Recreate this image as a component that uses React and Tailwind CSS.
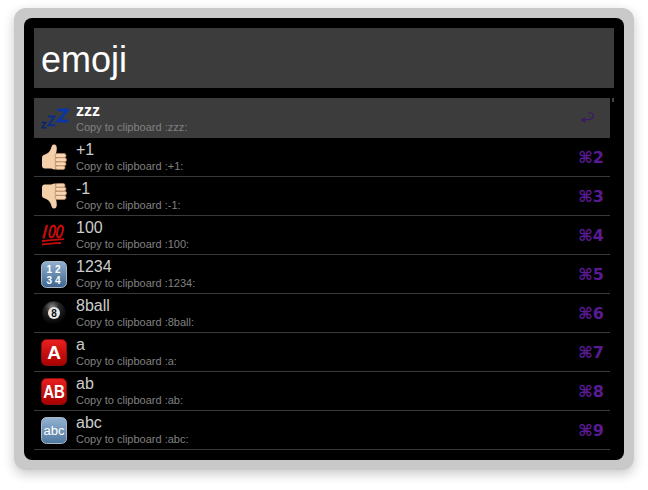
const ZzzIcon = () => (
  <svg width="28" height="25" viewBox="1 0 28 25" fill="none">
    <path d="M1.500 16.500h4.300l-4 5.300h4.500" strokeWidth="1.400" stroke="#0a2570" />
    <path d="M8 10.500h6.500l-6 8.800h6.800" strokeWidth="2" stroke="#0a2c88" />
    <path d="M17.500 4h10l-9.500 11h10.500" strokeWidth="2.800" stroke="#0b35a5" />
  </svg>
);

const ThumbUp = ({ flip }) => (
  <svg width="26" height="26" viewBox="0 0 26 26" className={flip ? '-scale-y-100' : ''}>
    <path
      d="M1 13.500c0-1.500 1-2.500 3-3 3-1 5-3 6-6 .6-2 1-4 3-4 2.200 0 2.800 2 2.800 4 0 2-.5 4-1 6v15c-2 0-3-.5-5-1H5c-2.500 0-4-.5-4-3z"
      fill="#f4d0aa"
    />
    <g fill="#f7d6b4" stroke="#b9875e" strokeWidth="0.800">
      <rect x="14" y="9.500" width="11" height="4.200" rx="2" />
      <rect x="14" y="13.700" width="11.500" height="4.200" rx="2" />
      <rect x="14" y="17.900" width="11" height="4" rx="2" />
      <rect x="14.500" y="21.900" width="9.500" height="3.500" rx="1.700" />
    </g>
  </svg>
);

const Hundred = () => (
  <svg width="25" height="22" viewBox="0 0 25 22" fill="none" stroke="#c40a0a">
    <path d="M6 1 2.500 14.500" strokeWidth="2.400" />
    <ellipse cx="11.500" cy="7.500" rx="2.600" ry="6" transform="rotate(14 11.500 7.500)" strokeWidth="2" />
    <ellipse cx="19" cy="7.500" rx="2.600" ry="6" transform="rotate(14 19 7.500)" strokeWidth="2" />
    <path d="M1 17c8-.8 15-1.300 22-1.800M1 20.500c7-.8 13-1.100 19-1.500" strokeWidth="1.800" />
  </svg>
);

const KeyTile = ({ from, to, edge, children }) => (
  <svg width="26" height="27" viewBox="0 0 26 27">
    <defs>
      <linearGradient id={`tile-${from.slice(1)}`} x1="0" y1="0" x2="0" y2="1">
        <stop offset="0" stopColor={from} />
        <stop offset="1" stopColor={to} />
      </linearGradient>
    </defs>
    <rect x="0.500" y="0.500" width="25" height="26" rx="5" fill={`url(#tile-${from.slice(1)})`} stroke={edge} strokeWidth="1" />
    {children}
  </svg>
);

const svgFont = '"Liberation Sans", Arial, sans-serif';

const Numbers = () => (
  <KeyTile from="#93b0cf" to="#3d6590" edge="#a8b6c6">
    <text x="14" y="12" textAnchor="middle" fontSize="10" fontWeight="700" letterSpacing="3" fill="#fff" fontFamily={svgFont}>12</text>
    <text x="14" y="23" textAnchor="middle" fontSize="10" fontWeight="700" letterSpacing="3" fill="#fff" fontFamily={svgFont}>34</text>
  </KeyTile>
);

const EightBall = () => (
  <svg width="25" height="24" viewBox="-1 0 25 24">
    <defs>
      <radialGradient id="ball" cx="0.420" cy="0.250" r="0.750">
        <stop offset="0" stopColor="#8a8a8a" />
        <stop offset="0.400" stopColor="#262626" />
        <stop offset="1" stopColor="#000" />
      </radialGradient>
    </defs>
    <circle cx="12" cy="12" r="11.700" fill="url(#ball)" />
    <circle cx="12" cy="12" r="6" fill="#e8e8e8" />
    <text x="12" y="15.500" textAnchor="middle" fontSize="10" fontWeight="700" fill="#111" fontFamily={svgFont}>8</text>
  </svg>
);

const RedTile = ({ label, size, stretch }) => (
  <KeyTile from="#ea2020" to="#a80000" edge="#8e0d0d">
    <text
      x="13"
      y="20"
      textAnchor="middle"
      fontSize={size}
      fontWeight="700"
      fill="#fff"
      fontFamily={svgFont}
      transform={stretch}
    >
      {label}
    </text>
  </KeyTile>
);

const AbcTile = () => (
  <KeyTile from="#93b3d2" to="#4f779f" edge="#a8b6c6">
    <text x="13" y="18" textAnchor="middle" fontSize="12" fill="#fff" fontFamily={svgFont} textLength="21" lengthAdjust="spacingAndGlyphs">abc</text>
  </KeyTile>
);

const ReturnIcon = () => (
  <svg width="15" height="12" viewBox="0 0 15 12" fill="none" stroke="#3a1a66" strokeWidth="1.300" className="mr-[9px]">
    <path d="M8.500 1c2.500-.5 4.800.3 4.800 3 0 2.300-2 3-4 3.300L2.500 8" />
    <path d="M4.800 5.400 1.500 8l3.300 2.800" fill="#3a1a66" strokeWidth="1" />
  </svg>
);

const rows = [
  { name: 'zzz', icon: <ZzzIcon /> },
  { name: '+1', icon: <ThumbUp />, key: '2' },
  { name: '-1', icon: <ThumbUp flip />, key: '3' },
  { name: '100', icon: <Hundred />, key: '4' },
  { name: '1234', icon: <Numbers />, key: '5' },
  { name: '8ball', icon: <EightBall />, key: '6' },
  { name: 'a', icon: <RedTile label="A" size="19" />, key: '7' },
  { name: 'ab', icon: <RedTile label="AB" size="15" stretch="translate(0 -5) scale(1 1.250)" />, key: '8' },
  { name: 'abc', icon: <AbcTile />, key: '9' },
];

const Row = ({ name, icon, shortcut, selected }) => (
  <div className={`flex items-center pr-[6px] ${selected ? 'h-[40px] bg-[#3c3c3c]' : 'h-[39px] border-b border-[#3a3a3a]'}`}>
    <div className="flex w-[42px] shrink-0 justify-start pl-[7px]">{icon}</div>
    <div className="flex min-w-0 flex-1 flex-col">
      <div className={`text-[16px] leading-[18px] ${selected ? 'font-bold text-white' : 'text-[#cccccc]'}`}>{name}</div>
      <div className="mt-[1px] text-[11px] leading-[13px] text-[#808080]">Copy to clipboard :{name}:</div>
    </div>
    {selected ? (
      <ReturnIcon />
    ) : (
      <div className="pt-[2px] font-['DejaVu_Sans',sans-serif] text-[16px] font-bold leading-[18px] text-[#5a1a94]">⌘{shortcut}</div>
    )}
  </div>
);

export default function App() {
  return (
    <div className="h-[490px] w-[648px] overflow-hidden bg-white pl-[14px] pt-[8px] font-['Liberation_Sans',Arial,sans-serif]">
      <div className="w-[620px] rounded-[12px] bg-[#c9c9c9] p-[10px] shadow-[0_4px_12px_rgba(0,0,0,0.22)]">
        <div className="h-[442px] rounded-[8px] bg-black p-[10px]">
          <div className="flex h-[60px] items-center bg-[#3c3c3c] pl-[7px] pt-[4px] text-[36px] leading-none text-white">emoji</div>
          <div className="mt-[10px] flex">
            <div className="w-[576px]">
              {rows.map((row, i) => (
                <Row key={row.name} name={row.name} icon={row.icon} shortcut={row.key} selected={i === 0} />
              ))}
            </div>
            <div className="ml-[2px] h-[4px] w-[2px] bg-[#444444]" />
          </div>
        </div>
      </div>
    </div>
  );
}
